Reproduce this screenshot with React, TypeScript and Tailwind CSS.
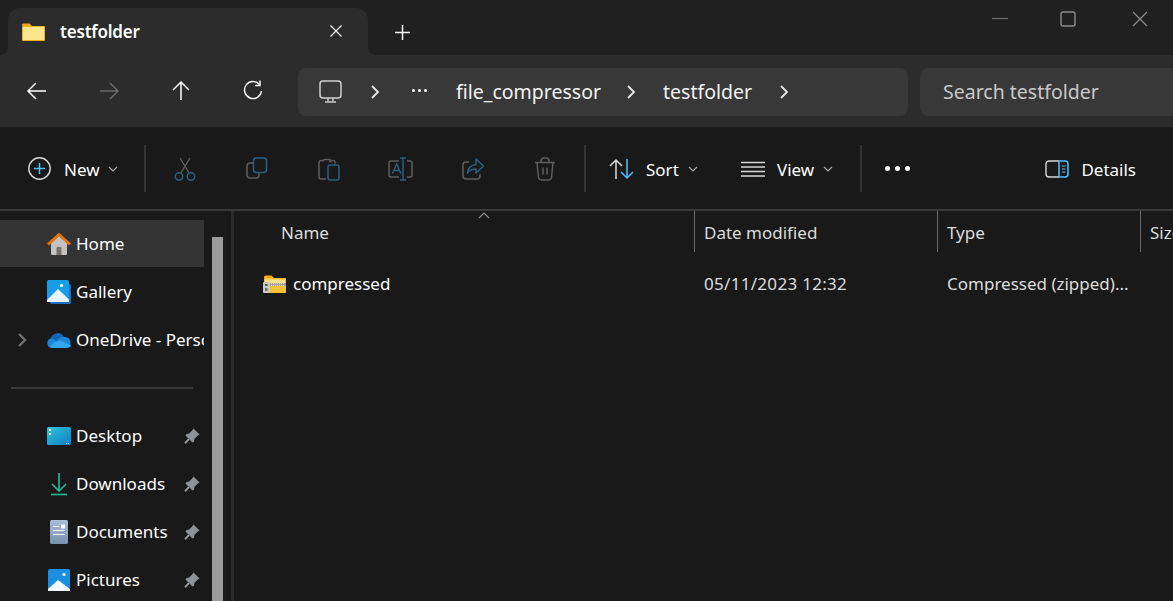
import React from "react";

const Svg = ({ w, h, vb, children, className = "" }: { w: number; h: number; vb?: string; children: React.ReactNode; className?: string }) => (
  <svg width={w} height={h} viewBox={vb ?? `0 0 ${w} ${h}`} fill="none" className={`shrink-0 ${className}`}>{children}</svg>
);

const Chevron = ({ color = "#e8e8e8", w = 1.8 }: { color?: string; w?: number }) => (
  <Svg w={10} h={16}><path d="M2 2l6 6-6 6" stroke={color} strokeWidth={w} /></Svg>
);
const SmallDown = () => (
  <Svg w={10} h={6}><path d="M1 1l4 4 4-4" stroke="#a8a8a8" strokeWidth={1.2} /></Svg>
);
const Sep = () => <div className="w-[2px] h-[47px] bg-[#333333] shrink-0" />;

const Pin = () => (
  <Svg w={16} h={16}>
    <path d="M9.5 0.5L15.500 6.500 13.500 7.800 10.500 10.800 10 13.500 8.500 14.500 1.500 7.500 2.500 6 5.200 5.500 8.200 2.500z" fill="#8d9398" />
    <path d="M5 11L1 15.200" stroke="#8d9398" strokeWidth={2} />
  </Svg>
);

const HomeIcon = () => (
  <Svg w={24} h={24}>
    <path d="M4 11l8-7 8 7v11a1 1 0 01-1 1H5a1 1 0 01-1-1z" fill="#c4c2c0" />
    <path d="M9.5 23v-7a1 1 0 011-1h3a1 1 0 011 1v7z" fill="#77716c" />
    <path d="M1 12.5L12 2.5l11 10" stroke="#e3740f" strokeWidth={3} strokeLinejoin="round" />
  </Svg>
);
const GalleryIcon = () => (
  <Svg w={24} h={24}>
    <rect x="3" y="4" width="21" height="20" rx="1.5" fill="#1b6fc2" />
    <rect x="0" y="0" width="22" height="22" rx="1.5" fill="#189ce6" />
    <path d="M0 20l11-11 11 10.5V22H0z" fill="#e9f4fb" />
    <circle cx="14.5" cy="5.5" r="1.6" fill="#fff" />
  </Svg>
);
const CloudIcon = () => (
  <Svg w={24} h={16}>
    <path d="M5 16a5 5 0 01-1-9.8A7 7 0 0116.8 5 5.5 5.5 0 0119 16z" fill="#1e86d8" />
    <path d="M4 6.2A7 7 0 0116.8 5c-4 0-6 2-7 4-2-1.5-4-2.500-5.800-2.800z" fill="#0f62b5" />
    <path d="M3 15c3-5 7-7 11-6l10 4c0 2-2 3-5 3H5c-1 0-1.500-.4-2-1z" fill="#2fa6ee" />
  </Svg>
);
const DesktopIcon = () => (
  <Svg w={24} h={18}>
    <rect x="0" y="0" width="24" height="18" rx="1.500" fill="url(#dk)" />
    <rect x="2" y="2" width="2" height="2" fill="#e8f6fb" />
    <rect x="2" y="6" width="2" height="2" fill="#e8f6fb" />
    <rect x="19" y="16" width="1" height="1" fill="#cfe" />
    <rect x="21" y="16" width="1" height="1" fill="#cfe" />
    <defs>
      <linearGradient id="dk" x1="0" y1="0" x2="1" y2="1"><stop stopColor="#33c3dc" /><stop offset="1" stopColor="#0a7fc4" /></linearGradient>
    </defs>
  </Svg>
);
const DownloadIcon = () => (
  <Svg w={24} h={24}>
    <path d="M12 1v18M5 12l7 7 7-7" stroke="#25b48f" strokeWidth={1.7} />
    <path d="M4 22.500h16" stroke="#25b48f" strokeWidth={1.7} />
  </Svg>
);
const DocumentsIcon = () => (
  <Svg w={18} h={24}>
    <rect width="18" height="24" rx="1.500" fill="url(#doc)" />
    <path d="M3 6.500h6M3 10.500h12M3 14.500h12" stroke="#fff" strokeWidth={1.2} />
    <rect x="11" y="4.500" width="4" height="4" fill="#fff" />
    <defs>
      <linearGradient id="doc" x1="0" y1="0" x2="0" y2="1"><stop stopColor="#a8bfd8" /><stop offset="1" stopColor="#7790ac" /></linearGradient>
    </defs>
  </Svg>
);
const PicturesIcon = () => (
  <Svg w={22} h={22}>
    <rect width="22" height="22" rx="1.500" fill="#1a8fe0" />
    <path d="M0 20l10-9 12 9v2H0z" fill="#f2f8fc" />
    <circle cx="16" cy="5.500" r="1.600" fill="#fff" />
  </Svg>
);

const FolderIcon = () => (
  <Svg w={23} h={18}>
    <path d="M0 2a1.500 1.500 0 011.500-1.500h6l2.500 2.500H0z" fill="#f0a818" />
    <rect x="0" y="3" width="23" height="15" rx="1" fill="#e8b520" />
    <rect x="1" y="4" width="21" height="13" fill="#fde58e" />
  </Svg>
);

const ZipFolderIcon = () => (
  <Svg w={23} h={18}>
    <path d="M1 2a1.500 1.500 0 011.500-1.500h6l2.500 2.500H1z" fill="#f0a818" />
    <rect x="1" y="3" width="22" height="15" rx="1" fill="#f5c332" />
    <rect x="2" y="4.500" width="20" height="5" fill="#fbe18a" />
    <rect x="6" y="8" width="17" height="3" fill="#a7a293" />
    <path d="M6 8.500h16M6 10.500h16" stroke="#dcd8c8" strokeWidth={1} strokeDasharray="1 1" />
    <rect x="0" y="7" width="7" height="11" rx="1" fill="#c9c9c5" />
    <rect x="2" y="9" width="2.500" height="2" fill="#55554f" />
    <rect x="2" y="13" width="2.500" height="3" fill="#74746e" />
  </Svg>
);

const NavBtn = ({ children }: { children: React.ReactNode }) => (
  <div className="w-[72px] h-full flex items-center justify-center shrink-0">{children}</div>
);
const Arrow = ({ d, color = "#fff" }: { d: string; color?: string }) => (
  <Svg w={22} h={22}><path d={d} stroke={color} strokeWidth={1.500} /></Svg>
);

const dim = "#5d5d5d";
const blue = "#2a5f80";

const SideRow = ({ icon, label, pin, chevron, active }: { icon: React.ReactNode; label: string; pin?: boolean; chevron?: boolean; active?: boolean }) => (
  <div className={`h-[48px] flex items-center w-[204px] overflow-hidden shrink-0 ${active ? "bg-[#333333] border-b border-[#191919]" : ""}`}>
    <div className="w-[47px] shrink-0 flex justify-center pr-[3px]">{chevron && <Chevron color="#6f6f6f" w={2.400} />}</div>
    <div className="w-[24px] h-[24px] flex items-center justify-center shrink-0">{icon}</div>
    <span className="ml-[5px] text-[17px] text-white whitespace-nowrap flex-1 overflow-hidden">{label}</span>
    {pin && <div className="mr-[4px]"><Pin /></div>}
  </div>
);

export default function App() {
  return (
    <div className="w-[1173px] h-[601px] overflow-hidden flex flex-col bg-[#191919] text-white" style={{ fontFamily: '"Noto Sans", sans-serif' }}>
      {/* title bar */}
      <div className="h-[8px] bg-[#202020] shrink-0" />
      <div className="h-[47px] flex bg-[#2c2c2c] shrink-0">
        <div className="w-[8px] bg-[#202020] rounded-br-lg" />
        <div className="w-[360px] bg-[#202020]">
          <div className="h-full bg-[#2c2c2c] rounded-t-xl flex items-center pl-[14px] pr-[26px]">
            <FolderIcon />
            <span className="ml-[15px] text-[17px] font-semibold flex-1 tracking-[-0.2px]">testfolder</span>
            <Svg w={12} h={12} className="mb-[2px]"><path d="M.5 .5l11 11M11.500 .5l-11 11" stroke="#f0f0f0" strokeWidth={1.300} /></Svg>
          </div>
        </div>
        <div className="flex-1 bg-[#202020] rounded-bl-lg flex relative">
          <div className="pl-[27px] pt-[17px]">
            <Svg w={15} h={15}><path d="M7.500 0v15M0 7.500h15" stroke="#f5f5f5" strokeWidth={1.500} /></Svg>
          </div>
          <div className="ml-auto flex items-start -mt-[8px] pt-[11px] pr-[25px]">
            <Svg w={16} h={16}><path d="M0 7.500h16" stroke="#6c6c6c" strokeWidth={1.200} /></Svg>
            <Svg w={16} h={16} className="ml-[52px]"><rect x="1" y="1" width="14" height="14" rx="2" stroke="#8a8a8a" strokeWidth={1.400} /></Svg>
            <Svg w={16} h={16} className="ml-[56px]"><path d="M1 1l14 14M15 1L1 15" stroke="#8a8a8a" strokeWidth={1.300} /></Svg>
          </div>
        </div>
      </div>
      {/* nav */}
      <div className="h-[73px] pt-[2px] bg-[#2c2c2c] flex items-center border-b border-[#1d1d1d] shrink-0">
        <div className="flex h-full shrink-0 ml-[1px] mb-[2px]">
          <NavBtn><Arrow d="M20 11H2.500M10 3l-8 8 8 8" /></NavBtn>
          <NavBtn><Arrow d="M2 11h17.500M12 3l8 8-8 8" color="#6a6a6a" /></NavBtn>
          <NavBtn><Arrow d="M11 20V2.500M3 10l8-8 8 8" /></NavBtn>
          <NavBtn><Svg w={22} h={22}><path d="M17.500 4.500A8.500 8.500 0 1019.500 11" stroke="#fff" strokeWidth={1.400} /><path d="M18 .5v5h-5" stroke="#fff" strokeWidth={1.400} /></Svg></NavBtn>
        </div>
        <div className="ml-[9px] w-[610px] h-[48px] bg-[#383838] rounded-lg flex items-center pl-[21px] shrink-0">
          <Svg w={23} h={24}>
            <rect x="1" y="1" width="21" height="17" rx="3" stroke="#d0d0d0" strokeWidth={1.500} />
            <path d="M9 18v3M14 18v3M6 22h11" stroke="#d0d0d0" strokeWidth={1.500} />
          </Svg>
          <div className="ml-[28px]"><Chevron /></div>
          <div className="ml-[32px] flex gap-[3px] mb-[4px] shrink-0">
            <div className="w-[3px] h-[3px] rounded-full bg-white" />
            <div className="w-[3px] h-[3px] rounded-full bg-white" />
            <div className="w-[3px] h-[3px] rounded-full bg-white" />
          </div>
          <span className="ml-[29px] text-[19.5px] text-[#f2f2f2]">file_compressor</span>
          <div className="ml-[25px]"><Chevron /></div>
          <span className="ml-[27px] text-[19.5px] text-[#f2f2f2]">testfolder</span>
          <div className="ml-[27px]"><Chevron /></div>
        </div>
        <div className="ml-[12px] flex-1 h-[48px] bg-[#383838] rounded-l-lg flex items-center pl-[23px]">
          <span className="text-[19.5px] text-[#c8c8c8]">Search testfolder</span>
        </div>
      </div>
      {/* toolbar */}
      <div className="h-[81px] bg-[#191919] flex items-center shrink-0 border-b-2 border-[#3a3a3a] box-content">
        <div className="ml-[28px] flex items-center w-[116px] shrink-0">
          <Svg w={23} h={23}>
            <circle cx="11.500" cy="11.500" r="10.700" stroke="#d8d8d8" strokeWidth={1.400} />
            <path d="M11.500 6v11M6 11.500h11" stroke="#4cc2ff" strokeWidth={1.500} />
          </Svg>
          <span className="ml-[13px] text-[17px] pt-[2px]">New</span>
          <div className="ml-[8px] mt-[1px]"><SmallDown /></div>
        </div>
        <Sep />
        <div className="flex ml-[3px] shrink-0">
          <NavBtn>
            <Svg w={22} h={24}>
              <path d="M6 1l9.500 15.500M16 1L6.500 16.500" stroke={dim} strokeWidth={1.400} />
              <circle cx="5" cy="19.500" r="3.700" stroke={blue} strokeWidth={1.500} />
              <circle cx="17" cy="19.500" r="3.700" stroke={blue} strokeWidth={1.500} />
            </Svg>
          </NavBtn>
          <NavBtn>
            <Svg w={22} h={22}>
              <rect x="7.500" y="1" width="13" height="14.500" rx="3" stroke={blue} strokeWidth={1.500} />
              <path d="M7 6H4a3 3 0 00-3 3v9a3 3 0 003 3h6a3 3 0 003-3v-2" stroke={dim} strokeWidth={1.500} />
            </Svg>
          </NavBtn>
          <NavBtn>
            <Svg w={22} h={24}>
              <path d="M11 4.500h2a2 2 0 00-2-2H7a2 2 0 00-2 2M5 3.500H3a2 2 0 00-2 2V20a2 2 0 002 2h5M14 3.500h1a2 2 0 012 2v1" stroke={dim} strokeWidth={1.500} />
              <rect x="10" y="8" width="11" height="15" rx="2" stroke={blue} strokeWidth={1.500} />
            </Svg>
          </NavBtn>
          <NavBtn>
            <Svg w={26} h={24}>
              <path d="M11 4H3a2 2 0 00-2 2v12a2 2 0 002 2h8M19 4h3a2 2 0 012 2v12a2 2 0 01-2 2h-3" stroke={dim} strokeWidth={1.500} />
              <path d="M15 1v22M12 1h6M12 23h6" stroke={blue} strokeWidth={1.500} />
              <path d="M4.500 16.500l4.200-9.500 4.200 9.500M6 13.500h6" stroke={blue} strokeWidth={1.500} />
            </Svg>
          </NavBtn>
          <NavBtn>
            <Svg w={24} h={24}>
              <path d="M8 5H5a3 3 0 00-3 3v11a3 3 0 003 3h11a3 3 0 003-3v-2" stroke={dim} strokeWidth={1.500} />
              <path d="M15 2l7.500 7-7.500 7v-4c-4 0-6.500 1-8.500 4 .5-5 3.500-8 8.500-8.500z" stroke={blue} strokeWidth={1.500} strokeLinejoin="round" />
            </Svg>
          </NavBtn>
          <NavBtn>
            <Svg w={22} h={24}>
              <path d="M1 5.500h20M7 5.500V4a3 3 0 013-3h2a3 3 0 013 3v1.500M3 5.500l1.500 15a3 3 0 003 2.500h7a3 3 0 003-2.500L19 5.500M9 10.500v7M13 10.500v7" stroke={dim} strokeWidth={1.500} />
            </Svg>
          </NavBtn>
        </div>
        <div className="ml-[3px]"><Sep /></div>
        <div className="ml-[23px] flex items-center shrink-0 w-[107px]">
          <Svg w={25} h={22}>
            <path d="M7 21V2M1 8l6-6 6 6" stroke="#d8d8d8" strokeWidth={1.500} />
            <path d="M18 1v19M12 14l6 6 6-6" stroke="#4cc2ff" strokeWidth={1.500} />
          </Svg>
          <span className="ml-[12px] text-[17px] pt-[2px]">Sort</span>
          <div className="ml-[9px] mt-[1px]"><SmallDown /></div>
        </div>
        <div className="ml-[25px] flex items-center shrink-0 w-[119px]">
          <Svg w={24} h={16}>
            <path d="M0 1.500h24M0 6h24M0 10.500h24M0 15h24" stroke="#d8d8d8" strokeWidth={1.300} />
          </Svg>
          <span className="ml-[12px] text-[17px] pt-[2px]">View</span>
          <div className="ml-[9px] mt-[1px]"><SmallDown /></div>
        </div>
        <Sep />
        <div className="ml-[23px] flex gap-[5px] shrink-0">
          <div className="w-[5px] h-[5px] rounded-full bg-white" />
          <div className="w-[5px] h-[5px] rounded-full bg-white" />
          <div className="w-[5px] h-[5px] rounded-full bg-white" />
        </div>
        <div className="ml-auto flex items-center pr-[37px]">
          <Svg w={24} h={18}>
            <path d="M14 1H4a3 3 0 00-3 3v10a3 3 0 003 3h10" stroke="#d8d8d8" strokeWidth={1.400} />
            <path d="M14 1h6a3 3 0 013 3v10a3 3 0 01-3 3h-6z" stroke="#4cc2ff" strokeWidth={1.500} />
            <path d="M17 6h3.500M17 9h3.500M17 12h3.500" stroke="#4cc2ff" strokeWidth={1.200} />
          </Svg>
          <span className="ml-[12px] text-[17px] pt-[2px]">Details</span>
        </div>
      </div>
      {/* body */}
      <div className="flex-1 flex min-h-0">
        <div className="w-[231px] flex shrink-0 overflow-hidden">
          <div className="w-[212px] shrink-0 pt-[9px] flex flex-col">
            <SideRow active icon={<HomeIcon />} label="Home" />
            <SideRow icon={<GalleryIcon />} label="Gallery" />
            <SideRow chevron icon={<CloudIcon />} label="OneDrive - Personal" />
            <div className="h-[48px] flex items-center pl-[11px] shrink-0"><div className="w-[182px] h-[2px] bg-[#3a3a3a]" /></div>
            <SideRow pin icon={<DesktopIcon />} label="Desktop" />
            <SideRow pin icon={<DownloadIcon />} label="Downloads" />
            <SideRow pin icon={<DocumentsIcon />} label="Documents" />
            <SideRow pin icon={<PicturesIcon />} label="Pictures" />
          </div>
          <div className="w-[11px] h-full pt-[26px] shrink-0"><div className="h-full bg-[#9b9b9b]" /></div>
        </div>
        <div className="w-[3px] bg-[#2a2a2a] shrink-0" />
        <div className="flex-1 min-w-0 relative overflow-hidden">
          <svg width="12" height="7" viewBox="0 0 12 7" fill="none" className="absolute left-[244px] top-[1px]"><path d="M1 6l5-5 5 5" stroke="#8f8f8f" strokeWidth={1.100} /></svg>
          <div className="grid grid-cols-[460px_243px_203px_1fr] h-[41px] text-[17px] text-[#dcdcdc]">
            <div className="pl-[47px] pt-[9px]">Name</div>
            <div className="border-l border-[#6a6a6a] pl-[9px] pt-[9px]">Date modified</div>
            <div className="border-l border-[#6a6a6a] pl-[9px] pt-[9px]">Type</div>
            <div className="border-l border-[#6a6a6a] pl-[9px] pt-[9px]">Size</div>
          </div>
          <div className="grid grid-cols-[460px_243px_203px_1fr] mt-[17px] h-[30px] items-center text-[17px] text-[#dcdcdc]">
            <div className="pl-[29px] flex items-center">
              <ZipFolderIcon />
              <span className="ml-[7px] text-white">compressed</span>
            </div>
            <div className="pl-[10px] tracking-[0.3px]">05/11/2023 12:32</div>
            <div className="pl-[10px]">Compressed (zipped)...</div>
            <div />
          </div>
        </div>
      </div>
    </div>
  );
}
